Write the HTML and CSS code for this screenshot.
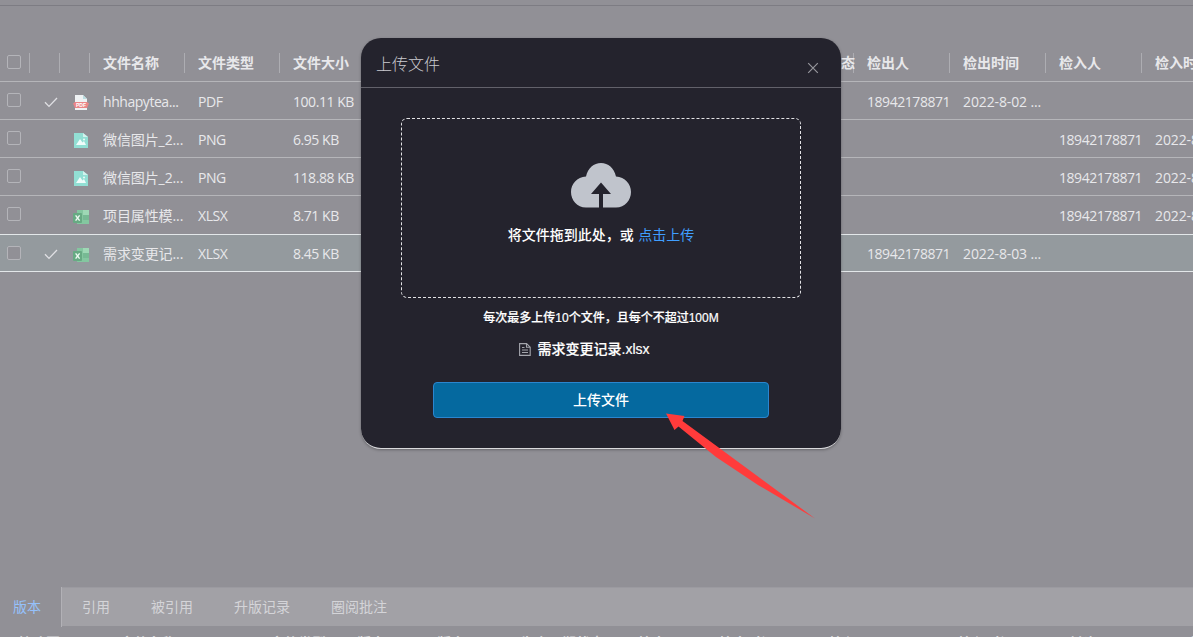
FILE: index.html
```
<!DOCTYPE html>
<html lang="zh-CN">
<head>
<meta charset="utf-8">
<title>上传文件</title>
<link rel="stylesheet" href="styles.css">
</head>
<body>
<svg class="defs" width="0" height="0">
  <symbol id="check" viewBox="0 0 14 12"><path d="M1 6.2 5 10.4 13 2" fill="none" stroke="#e0e0e4" stroke-width="1.3"/></symbol>
  <symbol id="pdf" viewBox="0 0 16 15"><path d="M2 0h8l4 4v11H2z" fill="#eef1f3"/><path d="M10 0v4h4z" fill="#b9dce0"/><path d="M0 8.500 2 7h12l2 1.500L14 13H2z" fill="#ea8587"/><text x="8" y="12" class="pdf-label">PDF</text></symbol>
  <symbol id="png" viewBox="0 0 16 15"><path d="M1 0h9l5 4v11H1z" fill="#92dfd4"/><path d="M10 0v4h5z" fill="#d2f3ee"/><path d="M3 12 7 6l2.5 3.500L11 8l2 4z" fill="#effcfa"/><circle cx="11" cy="6.500" r="1" fill="#effcfa"/></symbol>
  <symbol id="xls" viewBox="0 0 16 15"><path d="M4 0h12v14H4z" fill="#84c7a0"/><path d="M10 0h6v5h-6z" fill="#9ed8b5"/><path d="M10 5h6v5h-6z" fill="#77ba94"/><rect y="3" width="9" height="10" rx="1" fill="#67aa83"/><path d="m2.600 5.300 4 5.400m0-5.400-4 5.400" stroke="#eefaf2" stroke-width="1.400"/></symbol>
</svg>
<div class="app">
  <div class="toolbar"></div>
  <div class="table">
    <div class="row head">
      <div class="cell pick"><i class="box"></i></div><div class="cell"></div><div class="cell"></div>
      <div class="cell">文件名称</div><div class="cell">文件类型</div><div class="cell">文件大小</div>
      <div class="cell"></div><div class="cell"></div><div class="cell"></div><div class="cell"></div>
      <div class="cell">生命周期状态</div><div class="cell">检出人</div><div class="cell">检出时间</div><div class="cell">检入人</div><div class="cell">检入时间</div>
    </div>
    <div class="row">
      <div class="cell pick"><i class="box"></i></div><div class="cell mark"><svg><use href="#check"/></svg></div><div class="cell type"><svg><use href="#pdf"/></svg></div>
      <div class="cell">hhhapytea...</div><div class="cell">PDF</div><div class="cell">100.11 KB</div>
      <div class="cell out">18942178871</div><div class="cell date">2022-8-02 ...</div>
    </div>
    <div class="row">
      <div class="cell pick"><i class="box"></i></div><div class="cell"></div><div class="cell type"><svg><use href="#png"/></svg></div>
      <div class="cell name">微信图片_2...</div><div class="cell">PNG</div><div class="cell">6.95 KB</div>
      <div class="cell in">18942178871</div><div class="cell date">2022-8-02 ...</div>
    </div>
    <div class="row">
      <div class="cell pick"><i class="box"></i></div><div class="cell"></div><div class="cell type"><svg><use href="#png"/></svg></div>
      <div class="cell name">微信图片_2...</div><div class="cell">PNG</div><div class="cell">118.88 KB</div>
      <div class="cell in">18942178871</div><div class="cell date">2022-8-02 ...</div>
    </div>
    <div class="row">
      <div class="cell pick"><i class="box"></i></div><div class="cell"></div><div class="cell type xls"><svg><use href="#xls"/></svg></div>
      <div class="cell name">项目属性模...</div><div class="cell">XLSX</div><div class="cell">8.71 KB</div>
      <div class="cell in">18942178871</div><div class="cell date">2022-8-02 ...</div>
    </div>
    <div class="row selected">
      <div class="cell pick"><i class="box"></i></div><div class="cell mark"><svg><use href="#check"/></svg></div><div class="cell type xls"><svg><use href="#xls"/></svg></div>
      <div class="cell name">需求变更记...</div><div class="cell">XLSX</div><div class="cell">8.45 KB</div>
      <div class="cell out">18942178871</div><div class="cell date">2022-8-03 ...</div>
    </div>
  </div>
  <div class="details">
    <div class="tabs">
      <div class="tab active">版本</div><div class="tab">引用</div><div class="tab">被引用</div><div class="tab">升版记录</div><div class="tab">圈阅批注</div>
    </div>
    <div class="subhead">
      <span>缩略图</span><span>文件名称</span><span>文件类型</span><span>版本</span><span>版次</span><span>生命周期状态</span><span>检出人</span><span>检出时间</span><span>检入人</span><span>检入时间</span><span>创建人</span><span>创建时间</span>
    </div>
  </div>
</div>

<div class="overlay">
  <div class="dialog">
    <div class="dialog-head">
      <span>上传文件</span>
      <svg class="close" viewBox="0 0 12 12"><path d="m1.200 1.200 9.600 9.600m0-9.600-9.600 9.600" stroke="#96969c" stroke-width="1.200"/></svg>
    </div>
    <div class="dialog-body">
      <div class="drop">
        <svg class="cloud" viewBox="0 0 60 45"><path d="M15 13.500C17 5 22.800 0 30 0s13 5 15 13.500C54 14 60 21 60 29c0 8-6 15.500-15 15.500H32V31h8L30 19.500 20 31h8v13.500H15C6 44.500 0 37 0 29S6 14 15 13.500z" fill="#c0c4cc"/></svg>
        <div class="drop-text">将文件拖到此处，或 <span class="link">点击上传</span></div>
      </div>
      <div class="tip">每次最多上传10个文件，且每个不超过100M</div>
      <div class="file">
        <svg viewBox="0 0 12 13"><path d="M.600.600h7l3.600 3.600v8.200H.600zM7.500.600v3.700h3.700M3 4.500h2.500M3 7h6M3 9.500h6" fill="none" stroke="#a4a5ac" stroke-width="1.100"/></svg>
        <span>需求变更记录.xlsx</span>
      </div>
      <div class="submit">上传文件</div>
    </div>
  </div>
</div>
<svg class="arrow" viewBox="0 0 150 108"><path d="M0 .5 18.500 3 16.500 8 56 37 94 65 149 105.500 92 72 50 44 12.500 13.500 8.500 17z" fill="#ff3b3b"/></svg>
</body>
</html>
```
FILE: styles.css
```
* { box-sizing: border-box; }
body {
  margin: 0;
  height: 637px;
  overflow: hidden;
  position: relative;
  background: #919096;
  color: #e8e8eb;
  font: 14px/20px "Open Sans", "Noto Sans CJK SC", sans-serif;
}
.defs { position: absolute; }
.app { display: flex; flex-direction: column; height: 637px; overflow: hidden; }
.toolbar { height: 6px; flex: none; border-bottom: 1px solid #7d7c83; }
.table { padding-top: 38px; width: 1237px; }
.row {
  display: grid;
  grid-template-columns: 30px 30px 30px 95px 95px 95px 96px 96px 96px 95px 96px 96px 96px 96px 96px;
  height: 38px;
  align-items: center;
  border-bottom: 1px solid #b5b5b9;
}
.cell { padding: 2px 0 0 13px; white-space: nowrap; letter-spacing: -0.45px; }
.cell.name { letter-spacing: -0.1px; }
.cell.date { letter-spacing: -0.12px; }
.head .cell { letter-spacing: 0; font-weight: 700; height: 20px; line-height: 20px; padding-top: 0; border-right: 1px solid #adadb2; }
.out { grid-column: 12; }
.in { grid-column: 14; }
.cell.pick { padding: 0 0 0 7px; height: 16px; display: flex; }
.head .cell.pick { height: 20px; padding-top: 2px; }
.box { width: 14px; height: 14px; border: 1px solid #b4b4b9; border-radius: 2px; }
.mark svg { display: block; width: 14px; height: 12px; }
.type svg { display: block; width: 16px; height: 15px; margin-top: 2px; }
.type.xls svg { margin-top: 3px; }
.pdf-label { font: 700 5px "Liberation Sans", sans-serif; fill: #fff; text-anchor: middle; letter-spacing: 0; }
.row .mark { padding-left: 14px; }
.selected { height: 38px; background: #949a9e; border-top: 1px solid #e3e7e9; border-bottom-color: #e3e7e9; }
.selected .pick { padding-top: 1px; }
.selected .box { background: #919096; }
.row:nth-child(5) { border-bottom: 0; }
.details { margin-top: auto; height: 50px; flex: none; }
.tabs { display: flex; height: 39px; background: #a2a1a6; border-top: 1px solid #9b9aa0; }
.tab { line-height: 37px; padding-left: 41px; color: #d4d4d8; }
.tab.active { width: 62px; height: 40px; margin-top: -1px; padding-left: 13px; line-height: 39px; background: #919096; color: #95c1fb; border-right: 1px solid #b2b1b6; }
.tab.active + .tab { padding-left: 20px; }
.subhead {
  display: grid;
  grid-template-columns: 102px 150px 87px 80px 83px 118px 81px 110px 129px 110px 120px 90px;
  padding-left: 18px;
  height: 11px;
  overflow: hidden;
  font-weight: 700;
  line-height: 34px;
  color: #d9d9dc;
}
.overlay { position: absolute; inset: 0; display: flex; justify-content: center; padding: 38px 0 0 9px; }
.dialog { width: 480px; height: 411px; background: #24232d; border-radius: 20px; border-bottom: 1px solid #d9d9dc; box-shadow: 0 1px 3px rgba(0,0,0,.3); }
.dialog-head { display: flex; justify-content: space-between; align-items: center; height: 50px; padding: 2px 22px 0 15px; border-bottom: 1px solid #62616a; font-size: 16px; font-weight: 300; color: #cbcbd0; }
.close { width: 12px; height: 12px; margin-top: 8px; }
.dialog-body { display: flex; flex-direction: column; align-items: center; padding-top: 30px; color: #fff; }
.drop { width: 400px; height: 180px; border: 1px dashed #e3e3e6; border-radius: 6px; display: flex; flex-direction: column; align-items: center; padding-top: 44px; }
.cloud { width: 60px; height: 45px; }
.drop-text { margin-top: 17px; font-weight: 500; word-spacing: 1px; }
.link { color: #409eff; font-weight: 400; }
.tip { margin-top: 10px; font: 500 12px/20px "Liberation Sans", "Noto Sans CJK SC", sans-serif; -webkit-text-stroke: .2px; }
.file { display: flex; align-items: center; gap: 7px; margin: 11px 0 0 -34px; font: 500 14px/20px "Liberation Sans", "Noto Sans CJK SC", sans-serif; }
.file span { -webkit-text-stroke: .2px; }
.file svg { width: 12px; height: 13px; }
.submit { width: 336px; height: 36px; margin-top: 23px; border: 1px solid #2b86cf; border-radius: 4px; background: #05699f; text-align: center; line-height: 34px; font-weight: 500; }
.arrow { position: absolute; left: 666px; top: 413px; width: 150px; height: 108px; }
```
